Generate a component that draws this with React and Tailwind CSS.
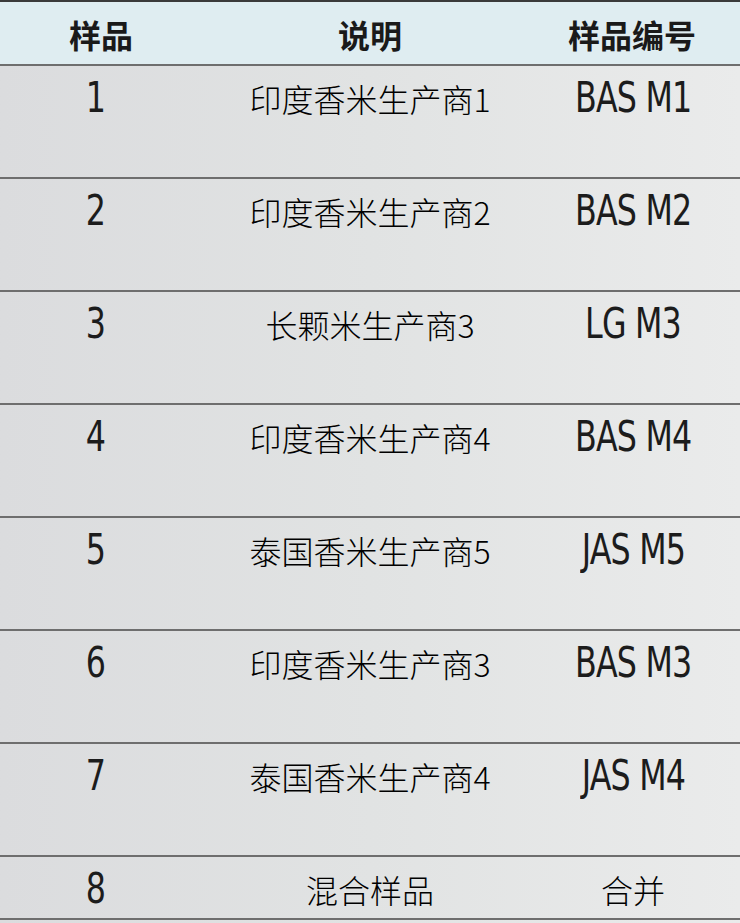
import React from 'react';

const rows = [
  { no: '1', desc: '印度香米生产商1', code: 'BAS M1' },
  { no: '2', desc: '印度香米生产商2', code: 'BAS M2' },
  { no: '3', desc: '长颗米生产商3', code: 'LG M3' },
  { no: '4', desc: '印度香米生产商4', code: 'BAS M4' },
  { no: '5', desc: '泰国香米生产商5', code: 'JAS M5' },
  { no: '6', desc: '印度香米生产商3', code: 'BAS M3' },
  { no: '7', desc: '泰国香米生产商4', code: 'JAS M4' },
];

const cjk = { fontFamily: '"Noto Sans CJK SC", "Noto Sans", sans-serif' };
const num = { fontFamily: '"DejaVu Sans Condensed", "Liberation Sans", sans-serif' };

const Code = ({ children }) => (
  <span className="inline-block text-[42px] leading-none tracking-[-1px] text-[#1c1c1c] scale-x-[0.84]" style={num}>
    {children}
  </span>
);

export default function App() {
  return (
    <div className="w-[740px] h-[923px] overflow-hidden bg-linear-to-r from-[#dbdcde] via-[#e1e3e3] to-[#eaebeb]">
      <div className="border-t-2 border-[#3a3a3a]" />

      {/* header */}
      <div className="grid grid-cols-[202px_336px_188px] h-[64px] bg-[#dfedf1] border-b-2 border-[#6e6e6e] pt-[16px]" style={cjk}>
        <div className="text-center text-[32px] font-bold leading-none text-[#1a1a1a]">样品</div>
        <div className="text-center text-[32px] font-bold leading-none text-[#1a1a1a]">说明</div>
        <div className="text-center text-[32px] font-bold leading-none text-[#1a1a1a]">样品编号</div>
      </div>

      {rows.map((r) => (
        <div key={r.no} className="grid grid-cols-[192px_356px_170px] h-[113px] border-b-2 border-[#6e6e6e]">
          <div className="text-center pt-[11px]"><Code>{r.no}</Code></div>
          <div className="text-center pt-[16px] text-[32px] font-light leading-none text-black" style={cjk}>{r.desc}</div>
          <div className="text-center pt-[11px]"><Code>{r.code}</Code></div>
        </div>
      ))}

      <div className="grid grid-cols-[192px_356px_170px] h-[63px] border-b-2 border-[#6e6e6e]">
        <div className="text-center pt-[11px]"><Code>8</Code></div>
        <div className="text-center pt-[16px] text-[32px] font-light leading-none text-black" style={cjk}>混合样品</div>
        <div className="text-center pt-[16px] text-[32px] font-light leading-none text-black" style={cjk}>合并</div>
      </div>
    </div>
  );
}
